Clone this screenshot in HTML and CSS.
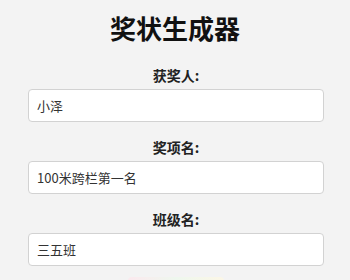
FILE: index.html
```html
<!DOCTYPE html>
<html lang="zh">
<head>
<meta charset="utf-8">
<title>奖状生成器</title>
<link rel="stylesheet" href="styles.css">
</head>
<body>
<div class="page">
  <h1 class="title">奖状生成器</h1>
  <div class="form">
    <div class="field">
      <label class="label" for="name">获奖人:</label>
      <input class="input" id="name" type="text" value="小泽">
    </div>
    <div class="field">
      <label class="label" for="award">奖项名:</label>
      <input class="input" id="award" type="text" value="100米跨栏第一名">
    </div>
    <div class="field">
      <label class="label" for="cls">班级名:</label>
      <input class="input" id="cls" type="text" value="三五班">
    </div>
    <button class="btn" type="button" aria-label="生成奖状"></button>
  </div>
</div>
</body>
</html>
```
FILE: styles.css
```css
html, body {
  margin: 0;
  padding: 0;
  background: #f3f3f3;
  font-family: "Noto Sans CJK SC", "Noto Sans", sans-serif;
  overflow: hidden;
}
.page {
  padding-top: 12px;
  display: flex;
  flex-direction: column;
  align-items: center;
}
.title {
  margin: 0;
  font-size: 26px;
  line-height: 31px;
  font-weight: 700;
  color: #111;
}
.form {
  margin-top: 22px;
  width: 296px;
  margin-left: 2px;
  display: flex;
  flex-direction: column;
  align-items: center;
  gap: 15px;
}
.field {
  width: 100%;
  display: flex;
  flex-direction: column;
  align-items: center;
  gap: 4px;
}
.label {
  font-size: 14px;
  line-height: 20px;
  font-weight: 700;
  color: #222;
}
.input {
  box-sizing: border-box;
  width: 100%;
  height: 33px;
  border: 1px solid #d2d2d2;
  border-radius: 4px;
  background: #fff;
  padding: 0 8px;
  font-family: "Noto Sans CJK SC", "Noto Sans", sans-serif;
  font-size: 13px;
  color: #333;
  outline: none;
}
.btn {
  margin-top: -4px;
  width: 96px;
  height: 32px;
  border: none;
  border-radius: 4px;
  background: linear-gradient(90deg, #fbe9ee, #eef7ee, #fbf6e6);
  padding: 0;
}
```
